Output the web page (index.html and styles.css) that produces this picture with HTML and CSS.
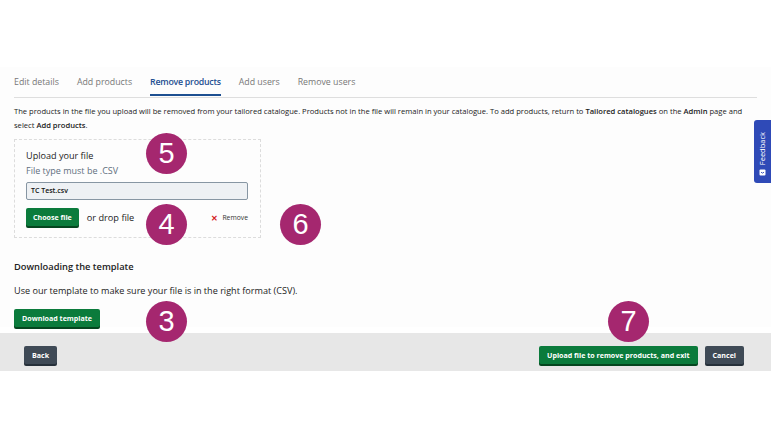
FILE: index.html
```html
<!DOCTYPE html>
<html lang="en">
<head>
<meta charset="utf-8">
<title>Remove products</title>
<link rel="stylesheet" href="styles.css">
</head>
<body>
<div class="page">
  <div class="top-space"></div>
  <main class="content">
    <nav class="tabs">
      <a class="tab">Edit details</a>
      <a class="tab">Add products</a>
      <a class="tab active">Remove products</a>
      <a class="tab">Add users</a>
      <a class="tab">Remove users</a>
    </nav>
    <p class="intro">The products in the file you upload will be removed from your tailored catalogue. Products not in the file will remain in your catalogue. To add products, return to <b>Tailored catalogues</b> on the <b>Admin</b> page and select <b>Add products</b>.</p>
    <section class="upload-box">
      <h3 class="upload-title">Upload your file</h3>
      <div class="hint">File type must be .CSV</div>
      <div class="file-input">TC Test.csv</div>
      <div class="file-row">
        <button class="btn btn-green">Choose file</button>
        <span class="drop">or drop file</span>
        <span class="remove"><span class="x">✕</span>Remove</span>
      </div>
    </section>
    <h3 class="dl-title">Downloading the template</h3>
    <p class="dl-text">Use our template to make sure your file is in the right format (CSV).</p>
    <button class="btn btn-green dl-btn">Download template</button>
  </main>
  <footer class="footer">
    <button class="btn btn-dark">Back</button>
    <div class="footer-right">
      <button class="btn btn-green">Upload file to remove products, and exit</button>
      <button class="btn btn-dark">Cancel</button>
    </div>
  </footer>

  <div class="marker m5">5</div>
  <div class="marker m4">4</div>
  <div class="marker m6">6</div>
  <div class="marker m3">3</div>
  <div class="marker m7">7</div>

  <div class="feedback">
    <span class="fb-text">Feedback</span>
    <svg class="fb-icon" width="7" height="7" viewBox="0 0 7 7"><rect x="0.5" y="0.5" width="6" height="6" rx="1" fill="#fff"/><path d="M2 3.2 Q3.5 5 5 3.2" stroke="#2f4ab7" stroke-width="0.9" fill="none"/></svg>
  </div>
</div>
</body>
</html>
```

FILE: styles.css
```css
* { box-sizing: border-box; }
html, body { margin: 0; padding: 0; background: #fff; }
body {
  font-family: "Open Sans", "Noto Sans", sans-serif;
  color: #222;
  width: 771px;
  height: 439px;
  overflow: hidden;
}
.page { position: relative; width: 771px; height: 439px; }
.top-space { height: 67px; background: #fff; }
.content {
  padding: 0 14px 0 14px;
  background: #fdfdfd;
}
.tabs {
  display: flex;
  gap: 18px;
  border-bottom: 1px solid #dedede;
  padding-top: 8px;
  height: 31px;
}
.tab {
  font-size: 8.8px;
  line-height: 14px;
  color: #777;
  padding-bottom: 5px;
  height: 21px;
  border-bottom: 2px solid transparent;
  white-space: nowrap;
}
.tab.active {
  color: #1d4f91;
  font-weight: 600;
  letter-spacing: -0.25px;
  border-bottom-color: #1d4f91;
}
.intro {
  margin: 6px 0 0;
  font-size: 7.6px;
  line-height: 14px;
  color: #222;
}
.intro b { font-weight: 600; }
.upload-box {
  width: 247px;
  height: 99px;
  margin-top: 7px;
  border: 1px dashed #dcdcdc;
  padding: 9px 12px 0 11px;
  display: flex;
  flex-direction: column;
}
.upload-title {
  margin: 0;
  font-size: 9.1px;
  line-height: 14px;
  font-weight: 400;
  color: #222;
}
.hint {
  font-size: 9px;
  line-height: 12px;
  color: #5f6f7e;
  margin-top: 2px;
}
.file-input {
  margin-top: 5px;
  height: 18px;
  border: 1px solid #8796a3;
  border-radius: 2px;
  background: #eef1f4;
  font-size: 7px;
  line-height: 16px;
  padding-left: 4px;
  color: #111;
  font-weight: 600;
}
.file-row {
  display: flex;
  align-items: center;
  margin-top: 8px;
  height: 18px;
}
.drop {
  font-size: 9.2px;
  margin-left: 8px;
  color: #222;
}
.remove {
  margin-left: auto;
  font-size: 6.8px;
  color: #333;
  display: flex;
  align-items: center;
  gap: 4px;
}
.remove .x { color: #d42020; font-weight: 700; font-size: 8px; }
.btn {
  font-family: inherit;
  font-size: 7.1px;
  font-weight: 700;
  color: #fff;
  border: none;
  border-radius: 2px;
  height: 18px;
  padding: 0 8px;
  line-height: 16px;
  cursor: pointer;
  white-space: nowrap;
}
.btn-green { background: #0b7b3c; box-shadow: 0 2px 0 #05461f; }
.btn-dark { background: #3f4a56; box-shadow: 0 2px 0 #26303a; }
.file-row .btn { padding: 0 7px; }
.dl-title {
  margin: 22px 0 0;
  font-size: 9.3px;
  line-height: 14px;
  font-weight: 600;
  color: #222;
}
.dl-text {
  margin: 10px 0 0;
  font-size: 9.1px;
  line-height: 14px;
  color: #222;
}
.dl-btn { margin-top: 11px; margin-bottom: 6px; display: block; }
.footer {
  height: 38px;
  background: #e7e7e7;
  display: flex;
  align-items: flex-start;
  justify-content: space-between;
  padding: 13px 27px 0 24px;
}
.footer-right { display: flex; gap: 7px; }
.footer .btn { padding: 0 8px; }
.marker {
  position: absolute;
  width: 41px;
  height: 41px;
  border-radius: 50%;
  background: #a5276f;
  color: #fff;
  font-family: "Liberation Sans", Arial, sans-serif;
  font-size: 29px;
  line-height: 41px;
  text-align: center;
}
.m5 { left: 146px; top: 133px; }
.m4 { left: 146px; top: 204px; }
.m6 { left: 280px; top: 204px; }
.m3 { left: 146px; top: 301px; }
.m7 { left: 608px; top: 301px; }
.feedback {
  position: absolute;
  left: 754px;
  top: 120px;
  width: 17px;
  height: 63px;
  background: #2f4ab7;
  border-radius: 3px 0 0 3px;
  display: flex;
  flex-direction: column;
  align-items: center;
  justify-content: flex-end;
  padding-bottom: 7px;
  gap: 4px;
}
.fb-text {
  writing-mode: vertical-rl;
  transform: rotate(180deg);
  font-size: 7.5px;
  color: #fff;
  line-height: 9px;
}
.fb-icon { display: block; }
```
